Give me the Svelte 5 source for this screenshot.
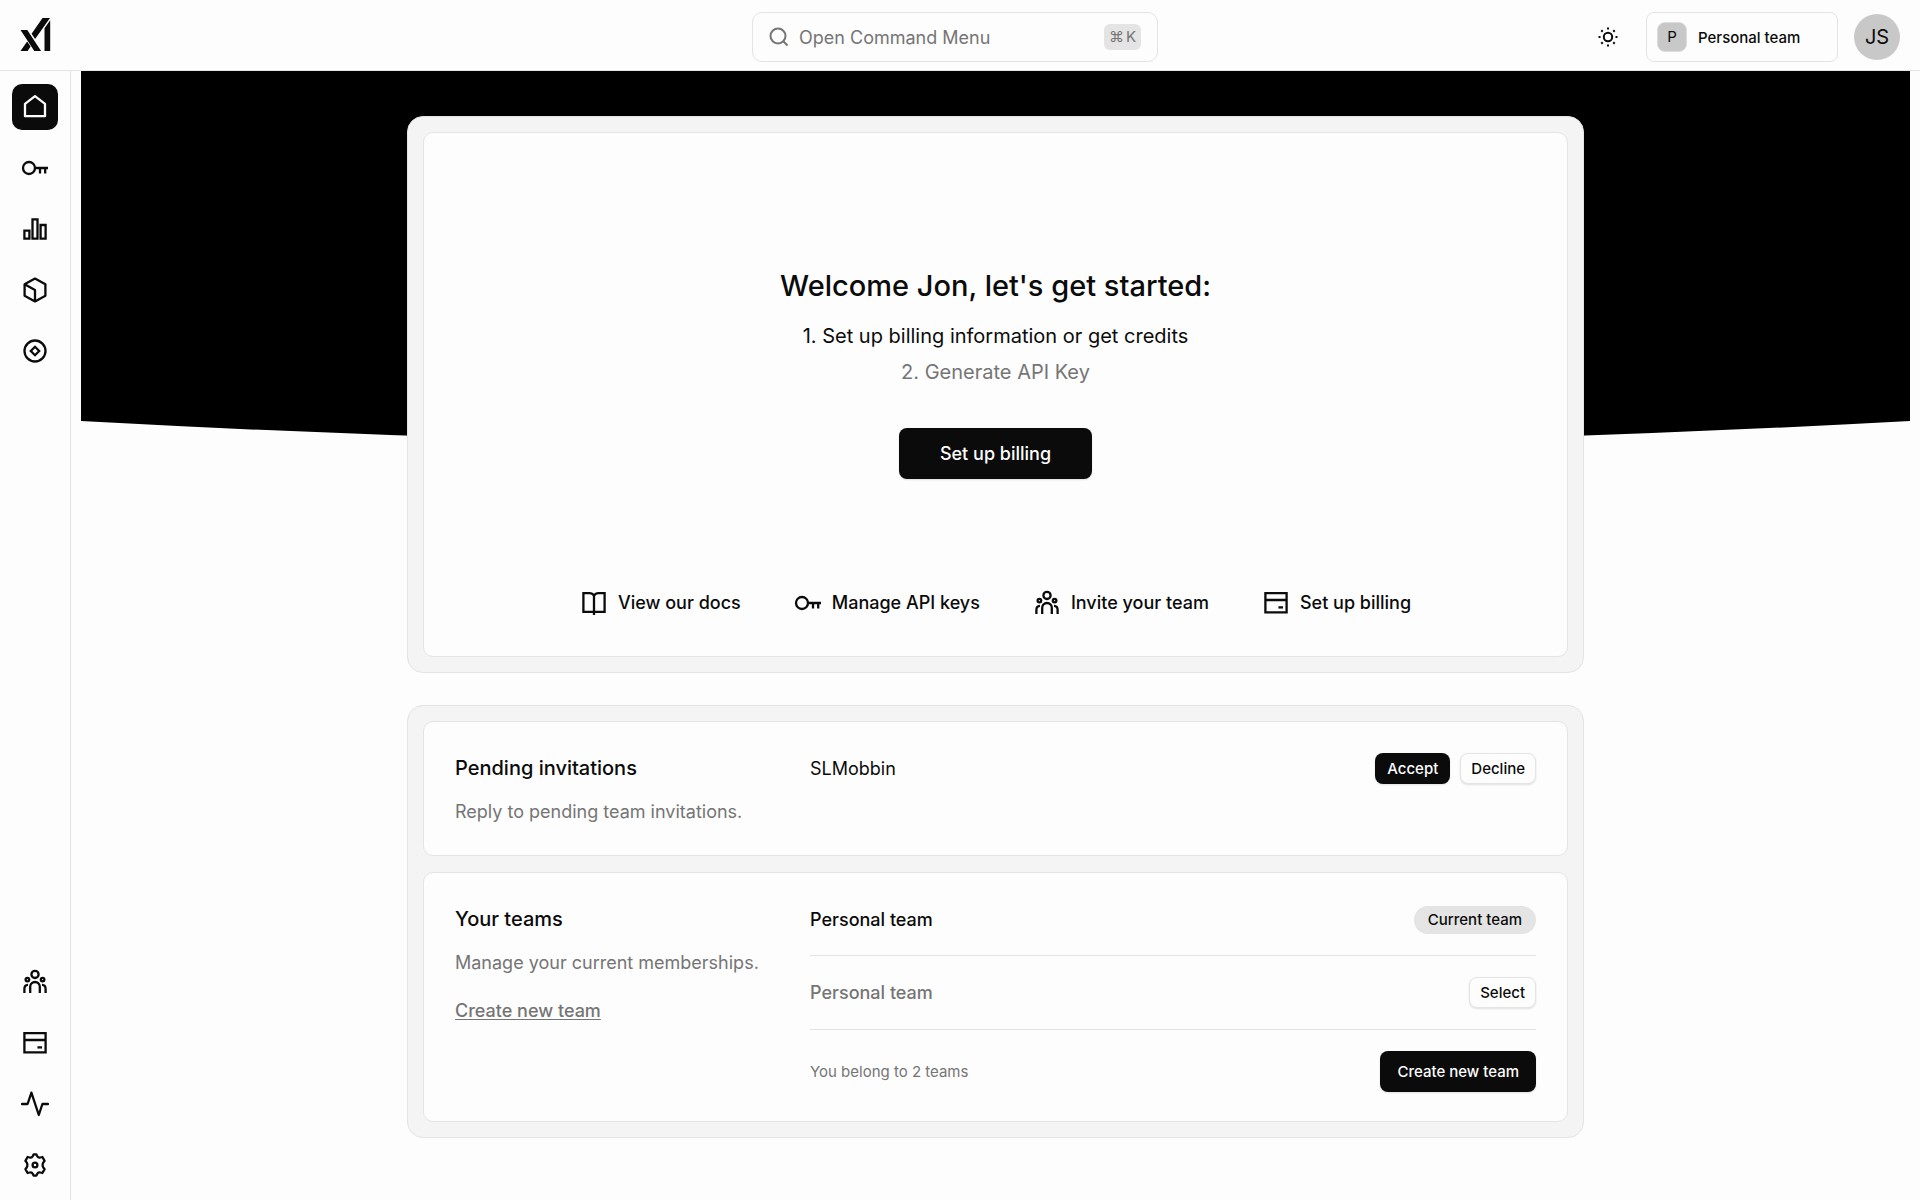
<script>
  const mainNav = [
    { icon: 'home', label: 'Home', active: true },
    { icon: 'key', label: 'API keys' },
    { icon: 'chart', label: 'Usage' },
    { icon: 'cube', label: 'Models' },
    { icon: 'coin', label: 'Credits' }
  ];
  const footNav = [
    { icon: 'team', label: 'Team' },
    { icon: 'card', label: 'Billing' },
    { icon: 'pulse', label: 'Status' },
    { icon: 'gear', label: 'Settings' }
  ];
  const quickLinks = [
    { icon: 'book', label: 'View our docs' },
    { icon: 'key', label: 'Manage API keys' },
    { icon: 'team', label: 'Invite your team' },
    { icon: 'card', label: 'Set up billing' }
  ];
</script>

{#snippet icon(name)}
  <svg class="icon" viewBox="0 0 28 28" aria-hidden="true">
    {#if name === 'home'}
      <path d="M4 10.8 14 3.2l10 7.6v12.4H4z" stroke-linejoin="round" />
    {:else if name === 'key'}
      <circle cx="8" cy="14" r="6" />
      <path d="M14 14h13M19 14v5.6M24.2 14v5.6" />
    {:else if name === 'chart'}
      <path d="M3.4 15.6h5v8h-5zM11.5 4.4h5v19.2h-5zM19.6 10h5v13.6h-5z" />
    {:else if name === 'cube'}
      <path d="M14 2.6 24.4 8.3v11.4L14 25.4 3.6 19.7V8.3zM3.6 8.3 14 14v11.4" stroke-linejoin="round" />
    {:else if name === 'coin'}
      <circle cx="14" cy="14" r="10.5" />
      <path d="m14 9.8 4.2 4.2-4.2 4.2L9.8 14z" />
    {:else if name === 'team'}
      <circle cx="14" cy="6.4" r="3.6" />
      <circle cx="6.4" cy="11.6" r="1.8" />
      <circle cx="21.6" cy="11.6" r="1.8" />
      <path d="M9.2 25v-6.2a4.8 4.8 0 0 1 9.6 0V25M3.4 25v-4.2c0-2.6 1-3.8 3.6-3.9M24.6 25v-4.2c0-2.6-1-3.8-3.6-3.9" />
    {:else if name === 'card'}
      <path d="M3.4 4.2h21.2v19.2H3.4zM3.4 11h21.2" />
      <path d="M16.4 18.4H21" />
    {:else if name === 'pulse'}
      <path d="M1 14h5.6L10.4 2.6l7.4 22.4 3.6-11H27" stroke-linejoin="round" stroke-linecap="round" />
    {:else if name === 'gear'}
      <path d="M11.7 5.3 12.6 3.4h2.8l.9 1.9c.7 1.3 1.7 1.6 3.1 1.2l2-.5 2.2 3.8-1.3 1.7c-.9 1.1-.9 3.9 0 5l1.3 1.7-2.2 3.8-2-.5c-1.4-.4-2.4-.1-3.1 1.2l-.9 1.9h-2.8l-.9-1.9c-.7-1.3-1.7-1.6-3.1-1.2l-2 .5-2.2-3.8 1.3-1.7c.9-1.1.9-3.9 0-5L4.4 9.8 6.6 6l2 .5c1.4.4 2.4.1 3.1-1.2z" stroke-linejoin="round" />
      <circle cx="14" cy="14" r="2.4" />
    {:else if name === 'book'}
      <path d="M14 6.6C13 5 11.6 4.2 9.6 4.2H3.4v18.6h21.2V4.2h-6.2c-2 0-3.4.8-4.4 2.4zM14 6.6V26" />
    {/if}
  </svg>
{/snippet}

<div class="app">
  <header>
    <a class="logo" href="#home" aria-label="Home">
      <svg viewBox="0 0 30 34" aria-hidden="true">
        <path d="M0 12h6.800l13.800 21h-6.800zM0 33l6.600-9.600 3.500 5.200-3 4.400zM22 0H29.500L14.600 21 11.100 15.800zM24 10.200 29.700 2.200V33H24z" />
      </svg>
    </a>
    <button class="search" type="button">
      <svg viewBox="0 0 20 20" aria-hidden="true"><circle cx="9" cy="9" r="7.5" /><path d="m14.5 14.5 4 4" /></svg>
      <span>Open Command Menu</span>
      <kbd><span>⌘</span><span>K</span></kbd>
    </button>
    <div class="account">
      <button class="theme" type="button" aria-label="Toggle theme">
        <svg viewBox="0 0 20 20" aria-hidden="true">
          <circle cx="10" cy="10" r="4.2" />
          <path d="M10 .5v2M10 17.5v2M.5 10h2M17.5 10h2M3.3 3.3l1.4 1.4M15.3 15.3l1.4 1.4M3.3 16.7l1.4-1.4M15.3 4.7l1.4-1.4" />
        </svg>
      </button>
      <button class="team" type="button"><span class="badge">P</span>Personal team</button>
      <button class="avatar" type="button">JS</button>
    </div>
  </header>

  <div class="body">
    <nav aria-label="Main">
      <div class="group">
        {#each mainNav as item}
          <a href="#{item.icon}" class:active={item.active} aria-label={item.label}>{@render icon(item.icon)}</a>
        {/each}
      </div>
      <div class="group">
        {#each footNav as item}
          <a href="#{item.icon}" aria-label={item.label}>{@render icon(item.icon)}</a>
        {/each}
      </div>
    </nav>

    <main>
      <svg class="backdrop" viewBox="0 0 1829 375" preserveAspectRatio="none" aria-hidden="true">
        <path d="M0 0H1829V350Q914.5 400 0 350Z" />
      </svg>

      <div class="content">
        <section class="frame">
          <div class="panel hero">
            <h1>Welcome Jon, let's get started:</h1>
            <p class="step">1. Set up billing information or get credits</p>
            <p class="step muted">2. Generate API Key</p>
            <button class="btn large" type="button">Set up billing</button>
            <div class="links">
              {#each quickLinks as link}
                <a href="#{link.icon}">{@render icon(link.icon)}{link.label}</a>
              {/each}
            </div>
          </div>
        </section>

        <section class="frame">
          <div class="panel split">
            <div class="intro">
              <h2>Pending invitations</h2>
              <p>Reply to pending team invitations.</p>
            </div>
            <div class="row invite">
              <span>SLMobbin</span>
              <div class="actions">
                <button class="btn small" type="button">Accept</button>
                <button class="btn small outline" type="button">Decline</button>
              </div>
            </div>
          </div>

          <div class="panel split">
            <div class="intro">
              <h2>Your teams</h2>
              <p>Manage your current memberships.</p>
              <a href="#create">Create new team</a>
            </div>
            <div class="teams">
              <div class="row first">
                <span>Personal team</span>
                <span class="pill">Current team</span>
              </div>
              <div class="row other">
                <span>Personal team</span>
                <button class="btn small outline" type="button">Select</button>
              </div>
              <div class="row total">
                <span>You belong to 2 teams</span>
                <button class="btn medium" type="button">Create new team</button>
              </div>
            </div>
          </div>
        </section>
      </div>
    </main>
  </div>
</div>

<style>
  :global(body) {
    margin: 0;
    background: #fdfdfd;
    color: #0b0b0b;
    font-family: Inter, sans-serif;
  }
  * {
    box-sizing: border-box;
  }
  h1, h2, p {
    margin: 0;
    font-weight: 500;
  }
  button {
    padding: 0;
    border: 0;
    background: none;
    color: inherit;
    font: inherit;
    cursor: pointer;
  }
  a {
    color: inherit;
    text-decoration: none;
  }
  svg {
    display: block;
    flex: none;
    fill: none;
    stroke: currentColor;
    stroke-width: 2;
  }
  .app {
    display: flex;
    flex-direction: column;
    min-height: 100vh;
  }
  header {
    display: grid;
    grid-template-columns: 1fr auto 1fr;
    align-items: center;
    height: 71px;
    padding: 4px 20px 0 10px;
    border-bottom: 1px solid #e4e4e4;
  }
  .logo {
    justify-self: start;
    padding: 0 0 4px 10px;
  }
  .logo svg {
    width: 31px;
    height: 34px;
    fill: #0b0b0b;
    stroke: none;
  }
  .search {
    display: flex;
    align-items: center;
    gap: 10px;
    width: 406px;
    height: 50px;
    padding: 0 16px;
    border: 1px solid #e4e4e4;
    border-radius: 10px;
    color: #757575;
    font-size: 18px;
    text-align: left;
  }
  .search svg {
    width: 20px;
    height: 20px;
  }
  .search > span {
    flex: 1;
  }
  kbd {
    display: flex;
    gap: 2px;
    padding: 0 5px;
    border-radius: 6px;
    background: #e4e4e4;
    font: 400 15px/26px Inter, "DejaVu Sans", sans-serif;
  }
  .account {
    display: flex;
    justify-content: flex-end;
    align-items: center;
    gap: 16px;
  }
  .theme {
    margin-right: 12px;
  }
  .theme svg {
    width: 20px;
    height: 20px;
  }
  .team {
    display: flex;
    align-items: center;
    gap: 11px;
    width: 192px;
    height: 50px;
    padding: 0 10px;
    border: 1px solid #e4e4e4;
    border-radius: 8px;
    font-size: 15px;
    font-weight: 500;
  }
  .badge {
    width: 30px;
    border: 1px solid #dcdcdc;
    border-radius: 8px;
    background: #c8c8c8;
    font-weight: 400;
    line-height: 28px;
  }
  .avatar {
    width: 46px;
    height: 46px;
    border-radius: 50%;
    background: #c8c8c8;
    font-size: 20px;
  }
  .body {
    display: flex;
    flex: 1;
  }
  nav {
    display: flex;
    flex-direction: column;
    justify-content: space-between;
    width: 71px;
    padding: 13px 12px 12px;
    border-right: 1px solid #e4e4e4;
  }
  .group {
    display: flex;
    flex-direction: column;
    gap: 15px;
  }
  nav a {
    display: grid;
    place-items: center;
    width: 46px;
    height: 46px;
    border-radius: 10px;
  }
  nav a.active {
    background: #0b0b0b;
    color: #fdfdfd;
  }
  .icon {
    width: 28px;
    height: 28px;
    stroke-width: 2.3;
  }
  main {
    position: relative;
    flex: 1;
    padding: 0 10px;
  }
  .backdrop {
    position: absolute;
    top: 0;
    left: 10px;
    width: calc(100% - 20px);
    height: 375px;
    fill: #000;
    stroke: none;
  }
  .content {
    position: relative;
    display: flex;
    flex-direction: column;
    gap: 32px;
    max-width: 1177px;
    margin: 0 auto;
    padding: 45px 0;
  }
  .frame {
    display: flex;
    flex-direction: column;
    gap: 16px;
    padding: 15px;
    border: 1px solid #e4e4e4;
    border-radius: 16px;
    background: #f4f4f4;
  }
  .panel {
    border: 1px solid #e4e4e4;
    border-radius: 10px;
    background: #fdfdfd;
  }
  .hero {
    display: flex;
    flex-direction: column;
    align-items: center;
    padding: 133px 32px 39px;
  }
  h1 {
    margin-bottom: 12px;
    font-size: 29px;
    line-height: 40px;
  }
  .step {
    font-size: 20px;
    font-weight: 400;
    line-height: 36px;
  }
  .muted {
    color: #757575;
  }
  .btn {
    border-radius: 8px;
    background: #0b0b0b;
    color: #fdfdfd;
    font-size: 15px;
    font-weight: 500;
    box-shadow: 0 1px 2px rgb(0 0 0 / 12%);
  }
  .large {
    height: 51px;
    margin-top: 38px;
    padding: 0 41px;
    font-size: 18px;
  }
  .medium {
    height: 41px;
    padding: 0 17px;
  }
  .small {
    height: 31px;
    padding: 0 12px;
  }
  .outline {
    padding: 0 10px;
    border: 1px solid #e4e4e4;
    background: #fdfdfd;
    color: #0b0b0b;
  }
  .links {
    display: flex;
    flex-wrap: wrap;
    justify-content: center;
    gap: 53px;
    margin-top: 110px;
    font-size: 18px;
    font-weight: 500;
    line-height: 28px;
  }
  .links a {
    display: flex;
    align-items: center;
    gap: 10px;
  }
  .split {
    display: grid;
    grid-template-columns: 355px 1fr;
    padding: 31px 31px 29px;
  }
  h2 {
    font-size: 20px;
    line-height: 30px;
  }
  .intro p {
    margin-top: 15px;
    color: #757575;
    font-size: 18px;
    font-weight: 400;
    line-height: 28px;
  }
  .intro a {
    display: inline-block;
    margin-top: 20px;
    color: #757575;
    font-size: 18px;
    font-weight: 500;
    line-height: 28px;
    text-decoration: underline;
    text-underline-offset: 2px;
  }
  .row {
    display: flex;
    justify-content: space-between;
    align-items: center;
    font-size: 18px;
  }
  .invite {
    align-self: start;
  }
  .actions {
    display: flex;
    gap: 10px;
  }
  .first, .other {
    border-bottom: 1px solid #e4e4e4;
    font-weight: 500;
  }
  .first {
    height: 52px;
    padding-bottom: 20px;
  }
  .other {
    height: 74px;
  }
  .other > span, .total > span {
    color: #757575;
  }
  .total {
    padding-top: 21px;
  }
  .total > span {
    font-size: 15px;
  }
  .pill {
    padding: 0 14px;
    border-radius: 14px;
    background: #e4e4e4;
    font-size: 15px;
    line-height: 28px;
  }
</style>
